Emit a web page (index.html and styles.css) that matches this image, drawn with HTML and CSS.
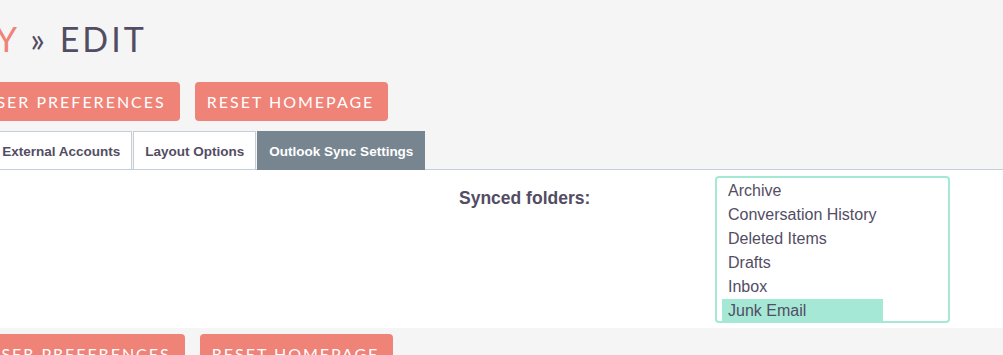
FILE: index.html
```html
<!DOCTYPE html>
<html lang="en">
<head>
    <meta charset="UTF-8">
    <title>Sally » Edit</title>
    <link rel="stylesheet" href="styles.css">
</head>
<body>
    <div class="page">
        <h2 class="module-title"><a href="#" class="crumb">Sally</a> <span class="sep">»</span> Edit</h2>

        <div class="action-buttons">
            <button class="button">Save</button>
            <button class="button">Cancel</button>
            <button class="button">Reset User Preferences</button>
            <button class="button">Reset Homepage</button>
        </div>

        <ul class="tabs">
            <li class="tab">User Profile</li>
            <li class="tab">Advanced</li>
            <li class="tab">External Accounts</li>
            <li class="tab">Layout Options</li>
            <li class="tab active">Outlook Sync Settings</li>
        </ul>

        <div class="panel">
            <div class="field-row">
                <label class="field-label">Synced folders:</label>
                <div class="listbox">
                    <ul class="options">
                        <li>Archive</li>
                        <li>Conversation History</li>
                        <li>Deleted Items</li>
                        <li>Drafts</li>
                        <li>Inbox</li>
                        <li class="selected">Junk Email</li>
                    </ul>
                </div>
            </div>
        </div>

        <div class="action-buttons bottom">
            <button class="button">Save</button>
            <button class="button">Cancel</button>
            <button class="button">Reset User Preferences</button>
            <button class="button">Reset Homepage</button>
        </div>
    </div>
</body>
</html>
```

FILE: styles.css
```css
:root {
    --ink: #534d64;
    --salmon: #f08377;
    --slate: #778591;
    --mint: #a5e8d6;
    --line: #c5ced6;
}

* {
    box-sizing: border-box;
    margin: 0;
    padding: 0;
}

body {
    background-color: #f5f5f5;
    color: var(--ink);
    font-family: 'Liberation Sans', Arial, sans-serif;
    overflow: hidden;
}

/* the view is scrolled to the right, so the page starts off screen */
.page {
    width: 1450px;
    margin-left: -400px;
}

.module-title {
    font-family: Lato, sans-serif;
    font-weight: 400;
    font-size: 34px;
    letter-spacing: 3px;
    text-transform: uppercase;
    line-height: 40px;
    padding: 19px 0 0 311px;
}

.module-title .crumb {
    color: var(--salmon);
    text-decoration: none;
}

.action-buttons {
    display: flex;
    gap: 15px;
    margin-top: 23px;
    padding-left: 106px;
}

.button {
    height: 39px;
    padding: 0 14px 0 12px;
    background-color: var(--salmon);
    color: #fff;
    border: none;
    border-radius: 4px;
    font-family: Lato, sans-serif;
    font-size: 16px;
    letter-spacing: 2px;
    text-transform: uppercase;
}

.tabs {
    list-style: none;
    display: flex;
    margin-top: 10px;
    padding-left: 200px;
    border-bottom: 1px solid var(--line);
}

.tab {
    height: 39px;
    line-height: 39px;
    padding: 0 11px;
    margin-right: 1px;
    margin-bottom: -1px;
    background: #fff;
    border: 1px solid var(--line);
    font-size: 13.5px;
    font-weight: bold;
}

.tab.active {
    background: var(--slate);
    border-color: var(--slate);
    color: #fff;
}

.panel {
    background: #fff;
    height: 158px;
    padding-top: 7px;
}

.field-row {
    display: flex;
    padding-left: 859px;
}

.field-label {
    width: 256px;
    font-size: 17.5px;
    font-weight: bold;
    padding-top: 11px;
}

.listbox {
    width: 235px;
    height: 147px;
    margin-top: -1px;
    border: 2px solid var(--mint);
    border-radius: 4px;
    padding: 1px 0 0 5px;
    overflow: hidden;
}

.options {
    list-style: none;
    width: 161px;
    white-space: nowrap;
}

.options li {
    height: 24px;
    line-height: 24px;
    padding-left: 6px;
    font-size: 16px;
}

.options li.selected {
    background: var(--mint);
}

.action-buttons.bottom {
    margin-top: 6px;
    padding-left: 111px;
}
```
